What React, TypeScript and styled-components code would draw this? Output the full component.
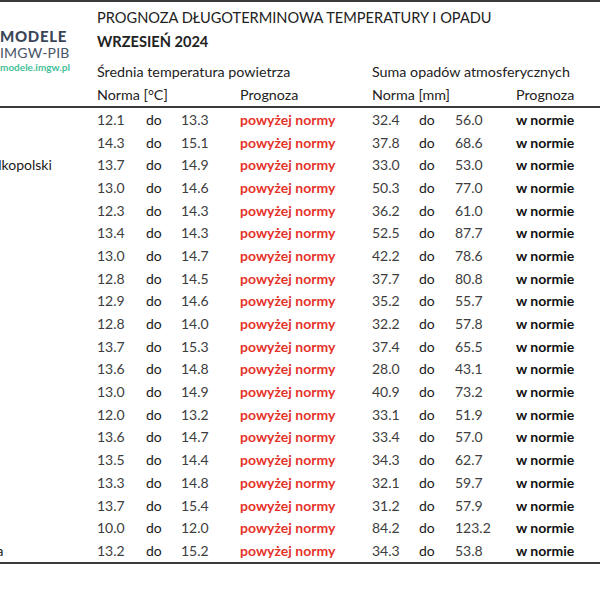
import styled, { createGlobalStyle } from 'styled-components';

const GlobalStyle = createGlobalStyle`
  html, body {
    margin: 0;
    padding: 0;
    background: #ffffff;
  }
  body {
    font-family: Lato, "Open Sans", sans-serif;
    color: #222222;
  }
`;

const Page = styled.div`
  width: 600px;
  height: 600px;
  overflow: hidden;
  border-top: 2px solid #3a3a3a;
  box-sizing: border-box;
`;

const Top = styled.div`
  display: grid;
  grid-template-columns: 97px 1fr;
  height: 58px;
`;

const Logo = styled.div`
  display: flex;
  flex-direction: column;
  padding-top: 26px;
  white-space: nowrap;
`;

const LogoMain = styled.div`
  font-size: 15px;
  font-weight: 900;
  letter-spacing: 0.7px;
  color: #3b4758;
  line-height: 17px;
`;

const LogoSub = styled.div`
  font-size: 14px;
  font-weight: 400;
  color: #4a5566;
  line-height: 15px;
  letter-spacing: 0.2px;
`;

const LogoUrl = styled.div`
  font-size: 10px;
  font-weight: 700;
  color: #45bf98;
  line-height: 12px;
  margin-top: 1px;
`;

const Titles = styled.div`
  display: flex;
  flex-direction: column;
  padding-top: 8px;
  gap: 8px;
`;

const Title = styled.div<{ $bold?: boolean }>`
  font-size: 14.6px;
  font-weight: ${(p) => (p.$bold ? 700 : 400)};
  line-height: 16px;
  white-space: nowrap;
`;

const Grid = styled.div<{ $height: number; $size: number }>`
  display: grid;
  grid-template-columns: 97px 49px 35px 59px 132px 47px 36px 61px 84px;
  grid-auto-rows: ${(p) => p.$height}px;
  align-items: center;
  font-size: ${(p) => p.$size}px;
  white-space: nowrap;
  border-bottom: 2px solid #3a3a3a;
`;

const Cell = styled.div<{ $span?: number }>`
  grid-column: span ${(p) => p.$span ?? 1};
  color: #222222;
`;

const Name = styled.div<{ $shift: number }>`
  margin-left: ${(p) => p.$shift}px;
  color: #1a1a1a;
`;

const Num = styled.div`
  color: #3d3d3d;
`;

const Do = styled.div`
  color: #1a1a1a;
`;

const Above = styled.div`
  color: #e5332a;
  font-weight: 700;
`;

const Normal = styled.div`
  color: #111111;
  font-weight: 700;
`;

type Row = [string, string, string, string, string];

const rows: Row[] = [
  ['', '12.1', '13.3', '32.4', '56.0'],
  ['', '14.3', '15.1', '37.8', '68.6'],
  ['Wielkopolski', '13.7', '14.9', '33.0', '53.0'],
  ['', '13.0', '14.6', '50.3', '77.0'],
  ['', '12.3', '14.3', '36.2', '61.0'],
  ['', '13.4', '14.3', '52.5', '87.7'],
  ['', '13.0', '14.7', '42.2', '78.6'],
  ['', '12.8', '14.5', '37.7', '80.8'],
  ['', '12.9', '14.6', '35.2', '55.7'],
  ['', '12.8', '14.0', '32.2', '57.8'],
  ['', '13.7', '15.3', '37.4', '65.5'],
  ['', '13.6', '14.8', '28.0', '43.1'],
  ['', '13.0', '14.9', '40.9', '73.2'],
  ['', '12.0', '13.2', '33.1', '51.9'],
  ['', '13.6', '14.7', '33.4', '57.0'],
  ['', '13.5', '14.4', '34.3', '62.7'],
  ['', '13.3', '14.8', '32.1', '59.7'],
  ['', '13.7', '15.4', '31.2', '57.9'],
  ['', '10.0', '12.0', '84.2', '123.2'],
  ['Polska', '13.2', '15.2', '34.3', '53.8'],
];

const shifts: Record<string, number> = { Wielkopolski: -27, Polska: -36 };

export default function App() {
  return (
    <Page>
      <GlobalStyle />
      <Top>
        <Logo>
          <LogoMain>MODELE</LogoMain>
          <LogoSub>IMGW-PIB</LogoSub>
          <LogoUrl>modele.imgw.pl</LogoUrl>
        </Logo>
        <Titles>
          <Title>PROGNOZA DŁUGOTERMINOWA TEMPERATURY I OPADU</Title>
          <Title $bold>WRZESIEŃ 2024</Title>
        </Titles>
      </Top>
      <Grid $height={23} $size={14.3}>
        <Cell />
        <Cell $span={4}>Średnia temperatura powietrza</Cell>
        <Cell $span={4}>Suma opadów atmosferycznych</Cell>
        <Cell />
        <Cell $span={3}>Norma [°C]</Cell>
        <Cell>Prognoza</Cell>
        <Cell $span={3}>Norma [mm]</Cell>
        <Cell>Prognoza</Cell>
      </Grid>
      <Grid $height={22.7} $size={14}>
        {rows.map((r, i) => [
          <Name key={`n${i}`} $shift={shifts[r[0]] ?? 0}>
            {r[0]}
          </Name>,
          <Num key={`a${i}`}>{r[1]}</Num>,
          <Do key={`d${i}`}>do</Do>,
          <Num key={`b${i}`}>{r[2]}</Num>,
          <Above key={`p${i}`}>powyżej normy</Above>,
          <Num key={`c${i}`}>{r[3]}</Num>,
          <Do key={`e${i}`}>do</Do>,
          <Num key={`f${i}`}>{r[4]}</Num>,
          <Normal key={`w${i}`}>w normie</Normal>,
        ])}
      </Grid>
    </Page>
  );
}
